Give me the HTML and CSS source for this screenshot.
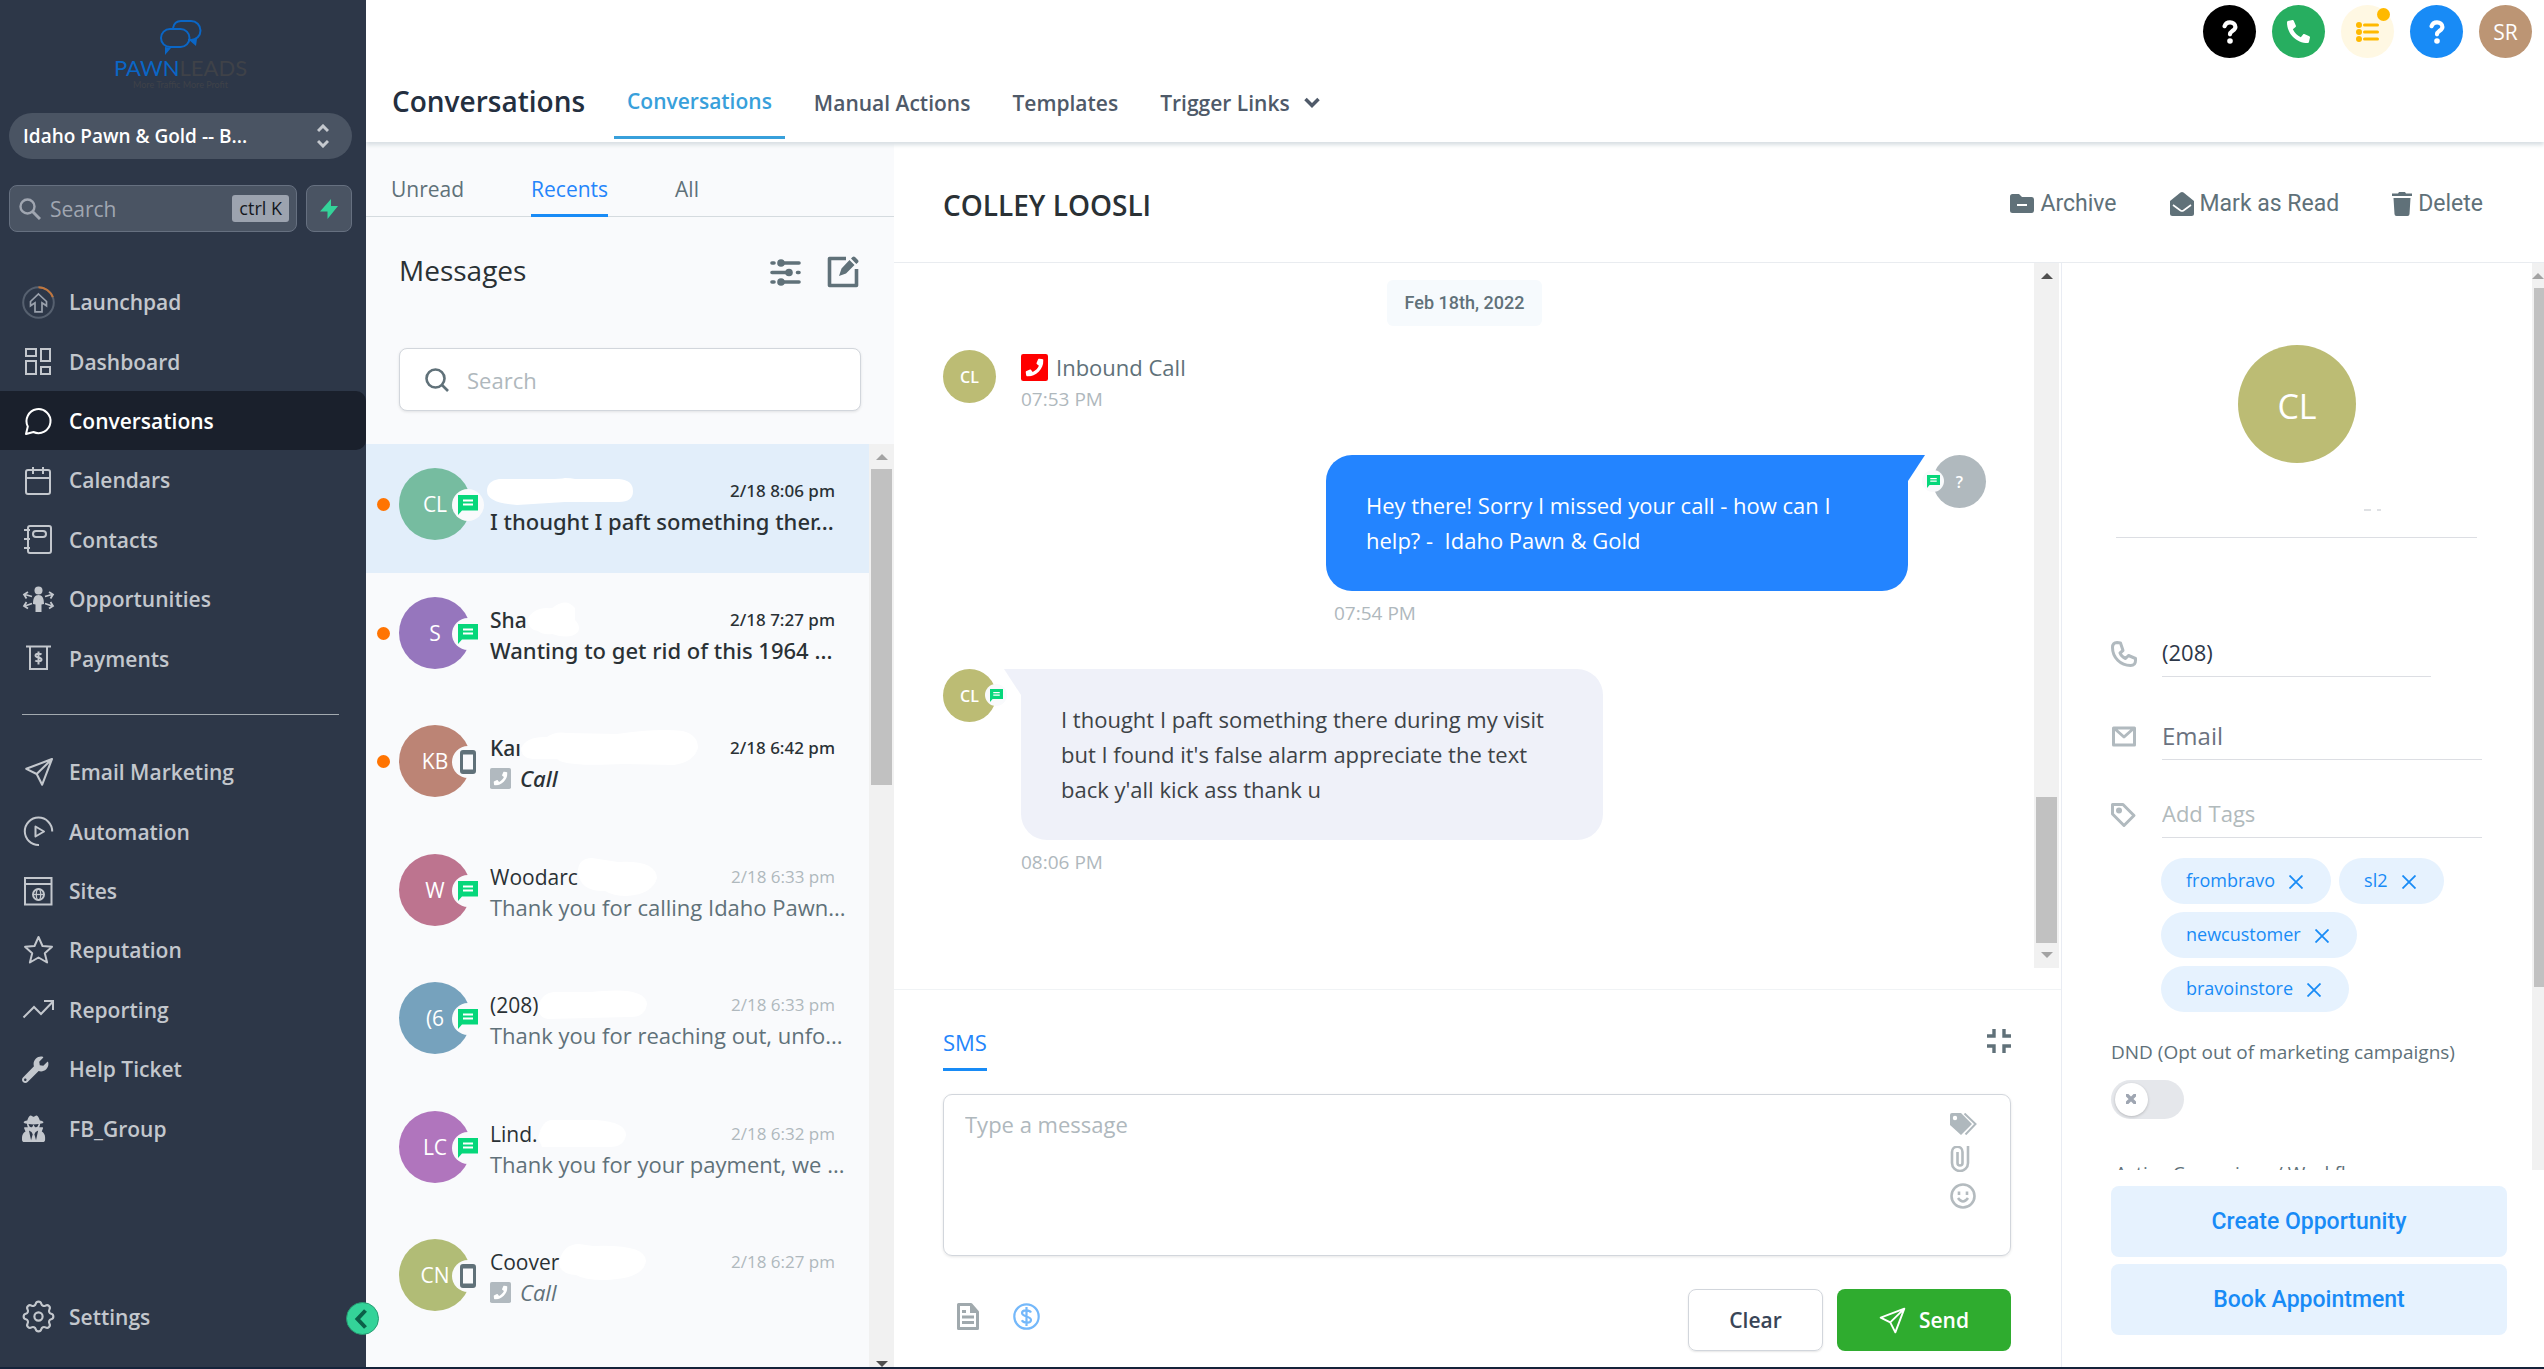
FILE: index.html
```html
<!DOCTYPE html>
<html lang="en">
<head>
<meta charset="utf-8">
<title>Conversations</title>
<link rel="stylesheet" href="styles.css">
</head>
<body>
<svg class="defs" aria-hidden="true">
  <symbol id="sms" viewBox="0 0 20 20"><path fill="#06d77b" d="M0 0h20v15.500H4L0 20z"/><path fill="#fff" d="M5 4.500h10v2H5zM5 8.500h10v2H5z"/></symbol>
  <symbol id="mobile" viewBox="0 0 16 24"><path fill="#607179" fill-rule="evenodd" d="M3 0h10a3 3 0 0 1 3 3v18a3 3 0 0 1-3 3H3a3 3 0 0 1-3-3V3a3 3 0 0 1 3-3zM3 4.500v15h10v-15z"/></symbol>
  <symbol id="phone" viewBox="0 0 512 512"><path fill="currentColor" d="M493.400 24.600l-104-24c-11.300-2.600-22.900 3.300-27.500 13.900l-48 112c-4.200 9.800-1.400 21.300 6.900 28l60.600 49.600c-36 76.700-98.900 140.500-177.200 177.200l-49.600-60.600c-6.800-8.300-18.200-11.100-28-6.900l-112 48C3.900 366.500-2 378.100.6 389.400l24 104C27.100 504.200 36.700 512 48 512c256.100 0 464-207.500 464-464 0-11.200-7.700-20.900-18.600-23.400z"/></symbol>
  <symbol id="callbox" viewBox="0 0 24 24"><rect width="24" height="24" rx="2" fill="currentColor"/><use href="#phone" x="4" y="4" width="16" height="16" color="#fff"/></symbol>
  <symbol id="plane" viewBox="0 0 24 24"><path fill="none" stroke="currentColor" stroke-width="1.700" stroke-linejoin="round" d="M22.500 1.500L1.500 9.500l8.500 4.200 4.500 8.800zM10 13.700L22.500 1.500"/></symbol>
  <symbol id="question" viewBox="0 0 16 24"><path fill="none" stroke="currentColor" stroke-width="4.200" stroke-linecap="round" stroke-linejoin="round" d="M2.600 6.200C3.500 3.400 5.500 2.300 8 2.300c3 0 5.400 1.700 5.400 4.600 0 3.600-5.400 4-5.400 7.400"/><circle cx="8" cy="21" r="2.800" fill="currentColor"/></symbol>
  <symbol id="up" viewBox="0 0 12 6"><path fill="currentColor" d="M0 6l6-6 6 6z"/></symbol>
  <symbol id="down" viewBox="0 0 12 6"><path fill="currentColor" d="M0 0l6 6 6-6z"/></symbol>
  <symbol id="x" viewBox="0 0 14 14"><path stroke="currentColor" stroke-width="1.800" d="M.5.5l13 13M13.500.5l-13 13"/></symbol>
</svg>

<div class="app">
  <aside class="sidebar">
    <a class="logo" href="#" aria-label="PawnLeads home">
      <svg class="logo-mark" viewBox="0 0 42 36"><g fill="none" stroke="#0a66c6" stroke-width="2"><path d="M10 9h10.500a9 9 0 0 1 0 18H10a9 9 0 0 1 0-18z"/><path d="M13 8C14 3 17 1 21 1h10a9.500 9.500 0 0 1 0 19h-3"/></g><path fill="#0a66c6" d="M5 27l6 1-6 7zM29 20l8-1-1 7z"/></svg>
      <span class="logo-name"><b>PAWN</b>LEADS</span>
      <span class="logo-tag">More Traffic More Profit</span>
    </a>
    <button class="location" type="button"><span>Idaho Pawn &amp; Gold -- B...</span>
      <svg width="12" height="24" viewBox="0 0 12 24" fill="none" stroke="#c5c9cf" stroke-width="3"><path d="M1 7l5-5 5 5M1 17l5 5 5-5"/></svg></button>
    <div class="quick">
      <label class="quick-search">
        <svg width="22" height="22" viewBox="0 0 22 22" fill="none" stroke="#a0a6b1" stroke-width="2.400"><circle cx="8.500" cy="8.500" r="7"/><path d="M13.500 13.500L21 21" stroke-width="3"/></svg>
        <input type="text" placeholder="Search" aria-label="Search menu"><kbd>ctrl K</kbd>
      </label>
      <button class="bolt" type="button" aria-label="Quick actions"><svg width="18" height="20" viewBox="0 0 18 20"><path fill="#34d399" d="M11 0v7h7L7.500 20v-7.500H0z"/></svg></button>
    </div>
    <nav class="menu">
      <a href="#"><svg viewBox="0 0 33 33" fill="none" stroke="currentColor"><circle cx="16.500" cy="16.500" r="15.300" stroke="#56606f" stroke-width="2"/><path stroke="#c2763c" stroke-width="2" d="M16.500 1.200a15.300 15.300 0 0 1 14.300 10"/><path stroke="#9aa1ac" stroke-width="1.700" d="M16.500 8l8 7.500v4.300l-4.500-3v9h-7v-9l-4.500 3v-4.300z"/></svg>Launchpad</a>
      <a href="#"><svg viewBox="0 0 33 33" fill="none" stroke="currentColor" stroke-width="2"><path d="M4 4h10v7H4zM19 4h9v12h-9zM4 16h10v13H4zM19 22h9v7h-9z"/></svg>Dashboard</a>
      <a class="active" href="#"><svg viewBox="0 0 33 33" fill="none" stroke="currentColor" stroke-width="2" stroke-linejoin="round"><path d="M4 29l1.800-7.500A12 12 0 1 1 11.500 27z"/></svg>Conversations</a>
      <a href="#"><svg viewBox="0 0 33 33" fill="none" stroke="currentColor" stroke-width="2"><rect x="4" y="6" width="24" height="24" rx="2"/><path d="M4 14h24M11 3v7M21 3v7"/></svg>Calendars</a>
      <a href="#"><svg viewBox="0 0 33 33" fill="none" stroke="currentColor" stroke-width="2"><rect x="6" y="3" width="23" height="27" rx="2"/><path d="M2 7h6M2 16h6M2 25h6"/><rect x="11" y="8" width="13" height="6" rx="3"/></svg>Contacts</a>
      <a href="#"><svg viewBox="0 0 33 33" fill="none" stroke="currentColor" stroke-width="1.800"><g fill="currentColor" stroke="none"><circle cx="16.500" cy="7.500" r="4"/><path d="M16.500 12c3.800 0 5.500 3 5.500 9l-2.500.5V29h-6v-7.500L11 21c0-6 1.700-9 5.500-9z"/></g><path d="M10 13.500L3 11.500m3-2.500l-4 2.500 2.500 4M23 13.500l7-2m-3-2.500l4 2.500-2.500 4M10 20.500l-7 2.500m1.500-4L2 23l4 2.500M23 20.500l7 2.500m-1.500-4L31 23l-4 2.500"/></svg>Opportunities</a>
      <a href="#"><svg viewBox="0 0 33 33" fill="none" stroke="currentColor" stroke-width="2"><path d="M4 4.500h25M8 4.500v22.500h17V4.500M19.500 12.500c-1-1-6-1.500-6 1s6 1.500 6 4-5 2-6.200 1M16.500 9.500v13"/></svg>Payments</a>
    </nav>
    <hr>
    <nav class="menu">
      <a href="#"><svg viewBox="-2 -1 27 27"><use href="#plane" width="24" height="24"/></svg>Email Marketing</a>
      <a href="#"><svg viewBox="0 0 33 33" fill="none" stroke="currentColor" stroke-width="2"><path d="M17 30A13.700 13.700 0 1 1 30.200 16.500M13.500 11.500l8.500 5-8.500 5z" stroke-linejoin="round"/></svg>Automation</a>
      <a href="#"><svg viewBox="0 0 33 33" fill="none" stroke="currentColor" stroke-width="2"><path d="M3 3h26.500v26.500H3zM3 9h26.500"/><circle cx="16.500" cy="19.500" r="5.500"/><ellipse cx="16.500" cy="19.500" rx="2.200" ry="5.500" stroke-width="1.300"/><path stroke-width="1.300" d="M11 19.500h11"/></svg>Sites</a>
      <a href="#"><svg viewBox="0 0 33 33" fill="none" stroke="currentColor" stroke-width="2" stroke-linejoin="round"><path d="M16.500 3l4 9 9.500.8-7.200 6.400 2.300 9.300-8.600-5-8.600 5 2.300-9.300L3 12.800l9.500-.8z"/></svg>Reputation</a>
      <a href="#"><svg viewBox="0 0 33 33" fill="none" stroke="currentColor" stroke-width="2"><path d="M1.500 24.500L12 14l7 7L30.500 9M22 8h9v9"/></svg>Reporting</a>
      <a href="#"><svg viewBox="0 -70 640 640"><path fill="currentColor" d="M507.730 109.100c-2.240-9.030-13.540-12.090-20.120-5.510l-74.360 74.360-67.880-11.310-11.310-67.880 74.360-74.360c6.620-6.620 3.430-17.900-5.660-20.160-47.380-11.740-99.550.91-136.580 37.930-39.640 39.640-50.550 97.100-34.050 147.200L18.740 402.760c-24.990 24.990-24.990 65.510 0 90.500 24.990 24.990 65.510 24.990 90.500 0l213.210-213.210c50.120 16.710 107.470 5.680 147.370-34.220 37.070-37.070 49.700-89.320 37.910-136.730zM64 472c-13.250 0-24-10.750-24-24 0-13.260 10.750-24 24-24s24 10.740 24 24c0 13.250-10.750 24-24 24z"/></svg>Help Ticket</a>
      <a href="#"><svg viewBox="0 -70 640 640"><path fill="currentColor" d="M383.900 308.300l23.900-62.600c4-10.500-3.700-21.700-15-21.700h-58.500c11-18.900 17.800-40.600 17.800-64v-.3c39.200-7.800 64-19.100 64-31.700 0-13.300-27.300-25.100-70.100-33-9.200-32.800-27-65.800-40.600-82.800-9.500-11.900-25.900-15.600-39.500-8.800l-27.600 13.800c-9 4.500-19.600 4.500-28.600 0L182.100 3.400c-13.600-6.800-30-3.100-39.500 8.800-13.500 17-31.400 50-40.600 82.800-42.700 7.900-70 19.700-70 33 0 12.600 24.800 23.900 64 31.700v.3c0 23.400 6.800 45.100 17.800 64H56.300c-11.500 0-19.200 11.700-14.700 22.300l25.800 60.200C27.300 329.800 0 372.700 0 422.400v44.800C0 491.900 20.100 512 44.800 512h358.400c24.700 0 44.800-20.100 44.800-44.800v-44.800c0-48.400-25.800-90.400-64.100-114.100zM176 480l-41.600-192 49.600 32 24 40-32 120zm96 0l-32-120 24-40 49.600-32L272 480zm41.700-298.500c-3.900 11.900-7 24.600-16.500 33.400-10.100 9.300-48 22.400-64-25-2.800-8.400-15.400-8.400-18.300 0-17 50.200-56 32.400-64 25-9.500-8.800-12.700-21.500-16.500-33.400-.8-2.500-6.300-5.700-6.300-5.800v-10.800c28.300 3.600 61 5.800 96 5.800s67.700-2.100 96-5.800v10.800c-.1.100-5.600 3.200-6.400 5.800z"/></svg>FB_Group</a>
    </nav>
    <nav class="menu menu-end">
      <a href="#"><svg viewBox="2 2 20 20" fill="none" stroke="currentColor" stroke-width="1.300"><path d="M10.325 4.317c.426-1.756 2.924-1.756 3.350 0a1.724 1.724 0 002.573 1.066c1.543-.94 3.310.826 2.370 2.370a1.724 1.724 0 001.065 2.572c1.756.426 1.756 2.924 0 3.350a1.724 1.724 0 00-1.066 2.573c.94 1.543-.826 3.310-2.370 2.370a1.724 1.724 0 00-2.572 1.065c-.426 1.756-2.924 1.756-3.350 0a1.724 1.724 0 00-2.573-1.066c-1.543.94-3.310-.826-2.370-2.370a1.724 1.724 0 00-1.065-2.572c-1.756-.426-1.756-2.924 0-3.350a1.724 1.724 0 001.066-2.573c-.94-1.543.826-3.310 2.370-2.370.996.608 2.296.07 2.572-1.065z"/><circle cx="12" cy="12" r="2.500"/></svg>Settings</a>
    </nav>
    <button class="collapse" type="button" aria-label="Collapse menu"><svg width="13" height="20" viewBox="0 0 13 20" fill="none" stroke="#0b5f48" stroke-width="4"><path d="M11.500 1.500L3.500 10l8 8.500"/></svg></button>
  </aside>

  <main class="main">
    <header class="topbar">
      <div class="account">
        <button class="round black" type="button" aria-label="Help"><svg width="16" height="24"><use href="#question"/></svg></button>
        <button class="round green" type="button" aria-label="Call"><svg class="flip" width="23" height="23"><use href="#phone"/></svg></button>
        <button class="round cream" type="button" aria-label="Tasks"><svg width="23" height="20" viewBox="0 0 23 20"><g fill="#ffb900"><circle cx="3" cy="3" r="3"/><circle cx="3" cy="10" r="3"/><circle cx="3" cy="17" r="3"/><rect x="7" y="1.500" width="16" height="3" rx="1.500"/><rect x="7" y="8.500" width="16" height="3" rx="1.500"/><rect x="7" y="15.500" width="16" height="3" rx="1.500"/></g></svg><i></i></button>
        <button class="round blue" type="button" aria-label="Support"><svg width="16" height="24"><use href="#question"/></svg></button>
        <button class="round tan" type="button">SR</button>
      </div>
      <div class="sections">
        <h1>Conversations</h1>
        <nav>
          <a class="active" href="#">Conversations</a><a href="#">Manual Actions</a><a href="#">Templates</a><a href="#">Trigger Links <svg width="16" height="11" viewBox="0 0 16 11" fill="none" stroke="currentColor" stroke-width="3.500"><path d="M1.500 2L8 8.500 14.500 2"/></svg></a>
        </nav>
      </div>
    </header>

    <div class="workspace">
      <section class="inbox">
        <nav class="filters"><a href="#">Unread</a><a class="active" href="#">Recents</a><a href="#">All</a></nav>
        <div class="inbox-head">
          <h2>Messages</h2>
          <button type="button" aria-label="Filter"><svg width="31" height="27" viewBox="0 0 31 27"><g fill="none" stroke="#607179" stroke-width="3.600" stroke-linecap="round"><path d="M2 4h2M11 4h18M2 13.500h17M27.500 13.500h1.500M2 23h2M11 23h18"/></g><g fill="#607179"><circle cx="11" cy="4" r="3.800"/><circle cx="19" cy="13.500" r="3.800"/><circle cx="11" cy="23" r="3.800"/></g></svg></button>
          <button type="button" aria-label="New message"><svg width="32" height="32" viewBox="0 0 32 32"><path fill="none" stroke="#607179" stroke-width="3.600" stroke-linejoin="round" d="M19 2.500H2.500v27h27V13"/><path fill="#607179" d="M12 20l2.500-7.500L22.500 4l5 5-8.500 8.500zM24 2.500L25.500 1a2 2 0 0 1 2.500 0l3 3a2 2 0 0 1 0 2.500l-1.700 1.500z"/></svg></button>
        </div>
        <label class="inbox-search"><svg width="24" height="24" viewBox="0 0 24 24" fill="none" stroke="#607179" stroke-width="2.600"><circle cx="10.500" cy="10.500" r="9"/><path d="M17 17l6 6"/></svg><input type="text" placeholder="Search" aria-label="Search messages"></label>
        <div class="list-wrap">
          <ul class="threads">
            <li class="unread current"><span class="face c1">CL<i><svg width="20" height="20"><use href="#sms"/></svg></i></span><div class="body"><div class="line"><svg class="mask lead" width="146" height="27" viewBox="0 0 146 27"><path fill="#fff" d="M12 1h50q12 0 16-1 6 0 10 1h44q14 1 14 12t-14 11H78L30 27Q0 25 0 13 0 3 12 1z"/></svg><time>2/18 8:06 pm</time></div><p>I thought I paft something ther...</p></div></li>
            <li class="unread"><span class="face c2">S<i><svg width="20" height="20"><use href="#sms"/></svg></i></span><div class="body"><div class="line"><b>Sha</b><svg class="mask" width="52" height="36" viewBox="0 0 52 36"><path fill="#fff" d="M0 18Q6 6 20 6q6 1 8-2 12-8 20 2v12q6 6 3 12-8 8-26 2-9 1-14-3-8 0-11-11z"/></svg><time>2/18 7:27 pm</time></div><p>Wanting to get rid of this 1964 ...</p></div></li>
            <li class="unread"><span class="face c3">KB<i><svg width="16" height="24"><use href="#mobile"/></svg></i></span><div class="body"><div class="line"><b>Kaı</b><svg class="mask" width="177" height="36" viewBox="0 0 177 36"><path fill="#fff" d="M0 18Q6 6 26 7q8-6 20-4l50 1q40-6 66-3 15 4 15 17-4 14-24 17l-50-1q-60 3-67-5H12Q0 28 0 18z"/></svg><time>2/18 6:42 pm</time></div><p><svg width="21" height="21"><use href="#callbox"/></svg><em>Call</em></p></div></li>
            <li><span class="face c4">W<i><svg width="20" height="20"><use href="#sms"/></svg></i></span><div class="body"><div class="line"><b>Woodarc</b><svg class="mask" width="79" height="38" viewBox="0 0 79 38"><path fill="#fff" d="M0 14Q0 0 14 0l26 4q38-2 39 16-4 16-30 18-14 0-22-5Q2 34 0 14z"/></svg><time>2/18 6:33 pm</time></div><p>Thank you for calling Idaho Pawn...</p></div></li>
            <li><span class="face c5">(6<i><svg width="20" height="20"><use href="#sms"/></svg></i></span><div class="body"><div class="line"><b>(208)</b><svg class="mask" width="109" height="30" viewBox="0 0 109 30"><path fill="#fff" d="M0 16Q4 3 16 2h38q54-6 55 12-2 14-18 13l-81 2Q0 28 0 16z"/></svg><time>2/18 6:33 pm</time></div><p>Thank you for reaching out, unfo...</p></div></li>
            <li><span class="face c6">LC<i><svg width="20" height="20"><use href="#sms"/></svg></i></span><div class="body"><div class="line"><b>Lind.</b><svg class="mask" width="88" height="28" viewBox="0 0 88 28"><path fill="#fff" d="M0 18Q4 0 14 0h44q30 2 30 15-2 12-16 12H4z"/></svg><time>2/18 6:32 pm</time></div><p>Thank you for your payment, we ...</p></div></li>
            <li><span class="face c7">CN<i><svg width="16" height="24"><use href="#mobile"/></svg></i></span><div class="body"><div class="line"><b>Coover</b><svg class="mask" width="87" height="36" viewBox="0 0 87 36"><path fill="#fff" d="M0 18Q4 0 20 0l14 2q53-2 53 15-2 18-42 19-20 0-28-5Q0 30 0 18z"/></svg><time>2/18 6:27 pm</time></div><p><svg width="21" height="21"><use href="#callbox"/></svg><em>Call</em></p></div></li>
          </ul>
          <div class="scroll s-inbox"><svg class="dim" width="12" height="6"><use href="#up"/></svg><span></span><svg width="12" height="6"><use href="#down"/></svg></div>
        </div>
      </section>

      <section class="detail">
        <div class="detail-head">
          <h2>COLLEY LOOSLI</h2>
          <button type="button"><svg width="24" height="19" viewBox="0 0 24 19"><path fill="currentColor" d="M2.500 0H9l3 3h9.500A2.500 2.500 0 0 1 24 5.500v11a2.500 2.500 0 0 1-2.500 2.500h-19A2.500 2.500 0 0 1 0 16.500v-14A2.500 2.500 0 0 1 2.500 0z"/><path stroke="#fff" stroke-width="2" d="M7 11h10"/></svg>Archive</button>
          <button type="button"><svg width="24" height="24" viewBox="0 0 24 24"><path fill="currentColor" d="M10.500.6a2.500 2.500 0 0 1 3 0L24 9v12.500a2.500 2.500 0 0 1-2.500 2.500h-19A2.500 2.500 0 0 1 0 21.500V9z"/><path fill="none" stroke="#fff" stroke-width="1.600" d="M3 13l7.500 5.500q1.500 1 3 0L21 13"/></svg>Mark as Read</button>
          <button type="button"><svg width="20" height="24" viewBox="0 0 20 24"><path fill="currentColor" d="M0 1.500h6L7 0h6l1 1.500h6v2.500H0zM1.500 6h17l-1 16a2 2 0 0 1-2 2h-11a2 2 0 0 1-2-2z"/></svg>Delete</button>
        </div>
        <div class="columns">
          <div class="chat">
            <div class="stream">
              <div class="feed">
                <span class="date">Feb 18th, 2022</span>
                <div class="event"><span class="face small c8">CL</span><div><p class="call"><svg width="27" height="27"><use href="#callbox"/></svg>Inbound Call</p><time>07:53 PM</time></div></div>
                <div class="event out"><div><p class="bubble">Hey there! Sorry I missed your call - how can I help? -&nbsp; Idaho Pawn &amp; Gold</p><time>07:54 PM</time></div><span class="face small c9">?<i><svg width="13" height="13"><use href="#sms"/></svg></i></span></div>
                <div class="event in"><span class="face small c8">CL<i><svg width="13" height="13"><use href="#sms"/></svg></i></span><div><p class="bubble">I thought I paft something there during my visit but I found it's false alarm appreciate the text back y'all kick ass thank u</p><time>08:06 PM</time></div></div>
              </div>
              <div class="scroll s-chat"><svg width="12" height="6"><use href="#up"/></svg><span></span><svg class="dim" width="12" height="6"><use href="#down"/></svg></div>
            </div>
            <form class="composer">
              <div class="composer-head"><a href="#">SMS</a><button type="button" aria-label="Shrink editor"><svg width="24" height="24" viewBox="0 0 24 24" fill="none" stroke="#607179" stroke-width="3.400"><path d="M0 7h7V0M17 0v7h7M0 17h7v7M17 24v-7h7"/></svg></button></div>
              <div class="editor">
                <textarea placeholder="Type a message" aria-label="Message"></textarea>
                <div class="tools">
                  <button type="button" aria-label="Insert tag"><svg width="28" height="22" viewBox="0 0 28 22"><path fill="#afb8bd" fill-rule="evenodd" d="M0 2a2 2 0 0 1 2-2h9l11 11-11 11L0 12zM5 2.800a2.200 2.200 0 1 0 0 4.400 2.200 2.200 0 0 0 0-4.400z"/><path fill="none" stroke="#afb8bd" stroke-width="2" d="M14.500.5L25.500 11l-10 10.500"/></svg></button>
                  <button type="button" aria-label="Attach file"><svg width="20" height="26" viewBox="0 0 20 26" fill="none" stroke="#b4bbbf" stroke-width="2.600"><path d="M18 0v17a8 8 0 0 1-16 0V6a5 5 0 0 1 10.500 0v11a2.300 2.300 0 0 1-5 0V6"/></svg></button>
                  <button type="button" aria-label="Emoji"><svg width="26" height="26" viewBox="0 0 26 26" fill="none" stroke="#b4bbbf" stroke-width="2.600"><circle cx="13" cy="13" r="11.500"/><path d="M8 15q5 7 10 0"/><path d="M9 8.500v3.500M17 8.500v3.500"/></svg></button>
                </div>
              </div>
              <div class="composer-foot">
                <button class="extra" type="button" aria-label="Templates"><svg width="22" height="27" viewBox="0 0 22 27"><path fill="none" stroke="#a0a9ad" stroke-width="3" stroke-linejoin="round" d="M1.500 1.500H14L20.500 9v16.500h-19z"/><path fill="#a0a9ad" d="M13 1v9h8zM5 7h4v3H5zM5 12.500h12v3H5zM5 18h12v3H5z"/></svg></button>
                <button class="extra" type="button" aria-label="Request payment"><svg width="27" height="27" viewBox="0 0 27 27" fill="none" stroke="#74b8fa" stroke-width="2.200"><circle cx="13.500" cy="13.500" r="12.200"/><path d="M18 9.500c-1.500-3-9-3-9 .5 0 4 9 3 9 7 0 3.500-7.500 3.500-9.200.3M13.500 4v19"/></svg></button>
                <span></span>
                <button class="btn clear" type="reset">Clear</button>
                <button class="btn send" type="button"><svg width="27" height="27"><use href="#plane"/></svg>Send</button>
              </div>
            </form>
          </div>

          <aside class="contact">
            <div class="contact-scroll">
              <div class="profile">
                <span class="face big c8">CL</span>
                <svg class="trace" width="17" height="2" viewBox="0 0 17 2"><path stroke="#dfe1e4" stroke-width="2" d="M0 1h7M13 1h4"/></svg>
                <hr>
                <label class="field short"><svg viewBox="0 0 26 26" fill="none" stroke="#b1babf" stroke-width="3"><path d="M6 1.500c-3 0-4.500 2-4.500 5 0 10 8 18 18 18 3 0 5-1.500 5-5v-2l-7-3-3 3c-2.500-1-4.500-3-5.500-5.500l3-2.500L9.500 2z" stroke-linejoin="round"/></svg><input type="tel" value="(208)" aria-label="Phone"></label>
                <label class="field mail"><svg viewBox="0 0 26 26" fill="none" stroke="#b1babf" stroke-width="3"><path d="M2.500 4h21v17h-21zM4 5l9 8 9-8" stroke-linejoin="round"/></svg><input type="email" placeholder="Email" aria-label="Email"></label>
                <label class="field"><svg viewBox="0 0 26 26"><path fill="none" stroke="#b1babf" stroke-width="3" stroke-linejoin="round" d="M1.500 2.500H12L23 13.500 13 23.500 1.500 12z"/><circle cx="8" cy="8.500" r="3" fill="#b1babf"/></svg><input type="text" placeholder="Add Tags" aria-label="Add tags"></label>
                <ul class="tags">
                  <li>frombravo<button type="button" aria-label="Remove frombravo"><svg width="14" height="14"><use href="#x"/></svg></button></li>
                  <li>sl2<button type="button" aria-label="Remove sl2"><svg width="14" height="14"><use href="#x"/></svg></button></li>
                  <li>newcustomer<button type="button" aria-label="Remove newcustomer"><svg width="14" height="14"><use href="#x"/></svg></button></li>
                  <li>bravoinstore<button type="button" aria-label="Remove bravoinstore"><svg width="14" height="14"><use href="#x"/></svg></button></li>
                </ul>
                <label class="dnd" for="dnd">DND (Opt out of marketing campaigns)</label>
                <span class="switch"><input id="dnd" type="checkbox"><svg width="10" height="10" viewBox="0 0 10 10"><path stroke="#9fa6b2" stroke-width="3.400" d="M0 0l10 10M10 0L0 10"/></svg></span>
                <p class="campaigns">Active Campaigns / Workflows</p>
              </div>
              <div class="scroll s-contact"><svg class="dim" width="12" height="6"><use href="#up"/></svg><span></span></div>
            </div>
            <div class="contact-actions"><button type="button">Create Opportunity</button><button type="button">Book Appointment</button></div>
          </aside>
        </div>
      </section>
    </div>
  </main>
</div>
</body>
</html>
```
FILE: styles.css
```css
* { box-sizing: border-box; }
body, h1, h2, p, ul, hr { margin: 0; padding: 0; }
body { font-family: "Open Sans", "Noto Sans", sans-serif; font-size: 22px; line-height: 28px; color: #2a3135; background: #fff; }
ul { list-style: none; }
a { color: inherit; text-decoration: none; }
button { font: inherit; color: inherit; background: none; border: 0; padding: 0; display: flex; align-items: center; justify-content: center; }
input, textarea { font: inherit; color: inherit; background: none; border: 0; padding: 0; outline: 0; min-width: 0; }
svg { display: block; flex: none; }
.defs { position: absolute; width: 0; height: 0; }

.app { display: grid; grid-template-columns: 366px 1fr; height: 100vh; border-bottom: 2px solid #15233a; }

/* Sidebar */
.sidebar { position: relative; display: flex; flex-direction: column; background: #2d3748; color: #c3c7cd; z-index: 2; min-height: 0; }
.logo { display: flex; flex-direction: column; align-items: center; height: 113px; padding: 20px 5px 0 0; color: #3f4248; font-family: Lato, sans-serif; }
.logo-mark { width: 42px; height: 36px; }
.logo-name { font-size: 22px; line-height: 24px; }
.logo-name b { color: #0a66c6; font-weight: 400; }
.logo-tag { font-size: 9px; line-height: 9px; }
.location { height: 46px; margin: 0 14px 26px 9px; padding: 0 23px 0 14px; justify-content: space-between; border-radius: 23px; background: #4a5463; color: #fff; font-size: 19px; font-weight: 600; }
.quick { display: flex; gap: 9px; margin: 0 14px 40px 9px; height: 47px; }
.quick-search, .bolt { border: 1px solid #667080; border-radius: 8px; background: #4a5463; }
.quick-search { flex: 1; display: flex; align-items: center; gap: 9px; padding: 0 7px 0 9px; min-width: 0; font-size: 21px; }
.quick-search input { flex: 1; }
.quick-search input::placeholder { color: #a0a6b1; opacity: 1; }
kbd { font: inherit; font-size: 18px; line-height: 27px; padding: 0 7px; border-radius: 3px; background: #9ca3af; color: #15181d; }
.bolt { width: 46px; }
.menu { display: grid; grid-auto-rows: 1fr; min-height: 416px; font-weight: 600; font-size: 21px; }
.menu a { display: flex; align-items: center; gap: 14px; padding: 1px 0 0 22px; border-radius: 0 10px 10px 0; }
.menu a svg { width: 33px; height: 33px; }
.menu a.active { background: #1a202c; color: #fff; }
.sidebar hr { border: 0; border-top: 1px solid #a3aab0; margin: 26px 27px 27px 22px; }
.menu-end { min-height: 60px; margin-top: auto; margin-bottom: 21px; }
.collapse { position: absolute; right: -13px; bottom: 32px; width: 33px; height: 33px; border-radius: 50%; background: #34d399; border: 1px solid #279c72; padding-right: 4px; }

/* Header */
.main { display: flex; flex-direction: column; min-width: 0; min-height: 0; }
.topbar { position: relative; display: flex; flex-direction: column; height: 142px; padding: 5px 12px 0 26px; background: #fff; box-shadow: 0 3px 4px #d8dfe3; z-index: 1; }
.account { display: flex; justify-content: flex-end; gap: 16px; }
.round { position: relative; width: 53px; height: 53px; border-radius: 50%; color: #fff; font-size: 21px; }
.round i { position: absolute; top: 3px; right: 4px; width: 13px; height: 13px; border-radius: 50%; background: #ffb900; }
.black { background: #000; } .green { background: #27ae60; } .cream { background: #fff8e3; } .blue { background: #188bf6; } .tan { background: #bc9574; }
.flip { transform: scaleX(-1); }
.sections { display: flex; gap: 29px; height: 81px; }
.sections h1 { font-size: 28px; font-weight: 600; line-height: 86px; color: #242f3f; }
.sections nav { display: flex; gap: 16px; font-size: 21px; font-weight: 600; color: #4f5a69; }
.sections nav a { display: flex; align-items: center; gap: 14px; padding: 8px 13px 0; }
.sections nav a.active { color: #38a0db; border-bottom: 3px solid #38a0db; }

/* Inbox */
.workspace { flex: 1; display: grid; grid-template-columns: 528px 1fr; min-height: 0; }
.inbox { display: flex; flex-direction: column; background: #f9fafc; min-height: 0; min-width: 0; }
.filters { display: flex; gap: 67px; height: 75px; padding: 0 25px; border-bottom: 1px solid #d5dbdf; color: #607179; font-size: 21px; }
.filters a { display: flex; align-items: center; padding-top: 22px; height: 75px; border-bottom: 3px solid transparent; }
.filters a.active { color: #2485fb; border-color: #188bf6; }
.inbox-head { display: flex; align-items: center; gap: 26px; height: 110px; padding: 0 35px 0 33px; }
.inbox-head h2 { flex: 1; font-size: 28px; font-weight: 400; line-height: 36px; padding-bottom: 5px; }
.inbox-search { display: flex; align-items: center; gap: 18px; height: 63px; margin: 21px 33px 33px; padding: 0 25px; background: #fff; border: 1px solid #d2d6dc; border-radius: 8px; box-shadow: 0 1px 3px #0000001a; }
.inbox-search input { flex: 1; }
.inbox-search input::placeholder { color: #afb8bd; opacity: 1; }
.list-wrap { flex: 1; display: flex; min-height: 0; overflow: hidden; }
.threads { flex: 1; display: grid; grid-template-columns: minmax(0, 1fr); grid-auto-rows: 1fr; height: 900px; min-width: 0; }
.threads li { position: relative; display: flex; gap: 19px; padding: 24px 34px 0 33px; color: #607179; }
.threads li.current { background: #e2eefa; }
.threads li.unread::before { content: ""; position: absolute; left: 11px; top: 54px; width: 13px; height: 13px; border-radius: 50%; background: #ff7402; }
.face { position: relative; flex: none; display: flex; align-items: center; justify-content: center; width: 72px; height: 72px; border-radius: 50%; color: #fff; font-size: 21px; }
.face i { position: absolute; left: 53px; top: 21px; width: 32px; height: 32px; border-radius: 50%; background: #f9fafc; display: flex; align-items: center; justify-content: center; }
.c1 { background: #76bca0; } .c2 { background: #9676bd; } .c3 { background: #bc8475; } .c4 { background: #bd748f; }
.c5 { background: #76a2bd; } .c6 { background: #b075bd; } .c7 { background: #b1bc76; } .c8 { background: #bcbc74; } .c9 { background: #b0b9be; }
.body { flex: 1; min-width: 0; white-space: nowrap; }
.line { display: flex; align-items: center; height: 34px; padding-top: 12px; margin-bottom: 3px; }
.line b { font-weight: 400; font-size: 21px; color: #2a3135; }
.line .mask { margin: -4px 0; }
.line .lead { margin-left: -3px; }
.line time { margin-left: auto; font-size: 17px; color: #afb8bd; }
.threads p { display: flex; align-items: center; gap: 9px; line-height: 32px; }
.threads p svg { color: #b1b9bf; }
.unread p, .unread .line b, .unread .line time { font-family: "Noto Sans", "Open Sans", sans-serif; font-weight: 500; color: #2a3135; }

/* Scroll tracks */
.scroll { display: flex; flex-direction: column; align-items: center; width: 25px; flex: none; padding: 10px 0; background: #f1f1f1; color: #505050; }
.scroll .dim { color: #a3a3a3; }
.scroll span { width: 21px; background: #c1c1c1; }
.s-inbox { padding-bottom: 0; }
.s-inbox span { height: 316px; margin: 9px 0 auto; }
.s-chat span { height: 146px; margin: auto 0 9px; }
.s-contact { width: 12px; overflow: hidden; }
.s-contact span { width: 10px; margin: 9px 0 0 2px; height: 699px; }

/* Conversation */
.detail { display: flex; flex-direction: column; min-width: 0; min-height: 0; }
.detail-head { display: flex; align-items: center; height: 121px; padding: 6px 61px 0 49px; border-bottom: 1px solid #e9ecf0; gap: 53px; color: #607179; font-family: Roboto, sans-serif; font-size: 23px; }
.detail-head h2 { flex: 1; font-family: "Open Sans", sans-serif; font-size: 28px; font-weight: 600; color: #2a3135; }
.detail-head button { gap: 6px; padding-bottom: 3px; }
.columns { flex: 1; display: grid; grid-template-columns: 1fr 483px; min-height: 0; }
.chat { display: flex; flex-direction: column; min-width: 0; min-height: 0; }
.stream { flex: 1; display: flex; min-height: 0; margin-bottom: 21px; padding-right: 2px; }
.feed { flex: 1; display: flex; flex-direction: column; padding: 17px 48px 0 49px; min-width: 0; }
.date { align-self: center; padding: 0 18px; line-height: 46px; border-radius: 6px; background: #f6fafd; color: #607179; font-family: Roboto, sans-serif; font-size: 18px; font-weight: 500; }
.event { display: flex; gap: 25px; margin-top: 24px; }
.event time { display: block; font-size: 19px; color: #afb8bd; }
.call { display: flex; align-items: center; gap: 8px; margin-top: 2px; line-height: 30px; color: #607179; }
.call svg { color: #f00; }
.call + time { margin-top: 3px; }
.small { width: 53px; height: 53px; font-size: 16px; font-weight: 600; }
.small i { left: 42px; top: 15px; width: 22px; height: 22px; }
.event.out { justify-content: flex-end; margin-top: 42px; }
.event.in { margin-top: 42px; }
.out .small i { left: -11px; }
.bubble { position: relative; width: 582px; padding: 33px 40px; line-height: 35px; border-radius: 26px; background: #eff1f9; color: #3d4347; }
.bubble + time { margin-top: 8px; }
.out .bubble { background: #2384ff; color: #fff; border-top-right-radius: 0; }
.out time { margin-left: 8px; }
.in .bubble { border-top-left-radius: 0; }
.bubble::after { content: ""; position: absolute; top: 0; width: 17px; height: 26px; background: inherit; }
.out .bubble::after { left: 100%; clip-path: polygon(0 0, 100% 0, 0 100%); }
.in .bubble::after { right: 100%; clip-path: polygon(0 0, 100% 0, 100% 100%); }

/* Composer */
.composer { padding: 34px 50px 16px 49px; border-top: 1px solid #f0f3f5; }
.composer-head { display: flex; justify-content: space-between; align-items: flex-start; margin-bottom: 23px; }
.composer-head a { color: #2485fb; border-bottom: 3px solid #188bf6; line-height: 36px; padding-bottom: 8px; }
.composer-head button { margin-top: 5px; }
.editor { display: flex; height: 162px; padding: 15px 32px 16px 21px; border: 1px solid #d2d6dc; border-radius: 9px; box-shadow: 0 1px 3px #0000001a; }
.editor textarea { flex: 1; resize: none; }
.editor textarea::placeholder { color: #afb8bd; opacity: 1; }
.tools { display: flex; flex-direction: column; align-items: flex-start; gap: 11px; padding-top: 3px; }
.tools button { min-width: 20px; }
.composer-foot { display: flex; align-items: center; gap: 14px; margin-top: 33px; padding-left: 14px; }
.extra { padding-bottom: 8px; }
.extra + .extra { margin-left: 20px; }
.composer-foot span { flex: 1; }
.btn { height: 62px; border-radius: 8px; font-size: 21px; font-weight: 600; }
.clear { width: 135px; border: 1px solid #d2d6dc; color: #394557; box-shadow: 0 1px 2px #0000001a; }
.send { width: 174px; gap: 13px; background: #2fac2f; color: #fff; }

/* Contact */
.contact { display: flex; flex-direction: column; border-left: 1px solid #e9ecf3; min-height: 0; min-width: 0; }
.contact-scroll { flex: 1; display: flex; min-height: 0; overflow: hidden; }
.profile { flex: 1; display: flex; flex-direction: column; padding: 82px 49px 0; min-width: 0; }
.big { align-self: center; width: 118px; height: 118px; padding-top: 3px; font-size: 34px; }
.trace { align-self: center; margin: 46px -151px 26px 0; }
.profile hr { flex: none; border: 0; border-top: 1px solid #dcdee3; margin: 0 6px 79px 5px; }
.field { display: flex; gap: 25px; align-items: center; height: 60px; margin: 0 1px 20px 0; color: #2d3748; }
.field svg { width: 26px; height: 26px; margin-top: 14px; }
.field input { flex: 1; height: 60px; border-bottom: 1px solid #dcdee3; padding-top: 11px; }
.field.short { margin-right: 52px; margin-bottom: 23px; }
.field.mail { margin-bottom: 18px; }
.field.mail input { font-size: 24px; }
.field input::placeholder { color: #b1babc; opacity: 1; }
.field.mail input::placeholder { color: #6b7280; opacity: 1; }
.tags { display: flex; flex-wrap: wrap; gap: 8px; margin: 0 0 26px 50px; }
.tags li { display: flex; align-items: center; gap: 14px; height: 46px; padding: 0 28px 2px 25px; border-radius: 23px; background: #e6f2fe; color: #188bf6; font-size: 18px; }
.tags button { padding-top: 3px; }
.dnd { color: #607179; font-size: 19px; margin-bottom: 14px; white-space: nowrap; }
.switch { position: relative; width: 73px; height: 39px; flex: none; }
.switch input { appearance: none; width: 73px; height: 39px; margin: 0; padding: 3px 4px; border-radius: 20px; background: #e5e7eb; display: block; }
.switch input::before { content: ""; display: block; width: 33px; height: 33px; border-radius: 50%; background: #fff; box-shadow: 0 1px 3px #00000033; }
.switch svg { position: absolute; left: 15px; top: 14px; pointer-events: none; }
.campaigns { margin: 40px 4px 0; flex: none; color: #607179; font-size: 19px; }
.contact-actions { display: flex; flex-direction: column; gap: 7px; padding: 16px 37px 32px 49px; }
.contact-actions button { height: 71px; border-radius: 8px; background: #e6f2fe; color: #188bf6; font-family: Roboto, sans-serif; font-size: 23px; font-weight: 500; }
```
